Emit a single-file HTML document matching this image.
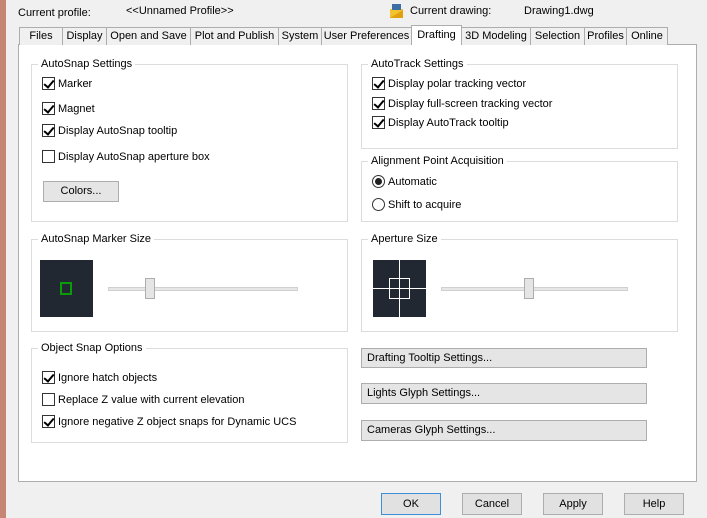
<!DOCTYPE html>
<html><head><style>
*{margin:0;padding:0;box-sizing:border-box}
body{width:707px;height:518px;background:#f0f0f0;position:relative;overflow:hidden;font:11px "Liberation Sans",sans-serif;color:#000}
.a{position:absolute;white-space:nowrap}
.strip{left:0;top:0;width:6px;height:518px;background:#c58676}
.panel{left:18px;top:44px;width:679px;height:438px;background:#fff;border:1px solid #adadad}
.tab{position:absolute;top:27px;height:18px;background:#f0f0f0;border:1px solid #adadad;border-bottom:none;text-align:center;line-height:16px;white-space:nowrap;overflow:hidden}
.tab.sel{top:25px;height:20px;background:#fff;line-height:18px}
.g{position:absolute;border:1px solid #dcdcdc}
.g>.t{position:absolute;top:-8px;left:6px;background:#fff;padding:0 3px;line-height:14px;white-space:nowrap}
.cb{position:absolute;width:13px;height:13px;border:1px solid #333;background:#fff}
.cb.c::after{content:"";position:absolute;left:3px;top:0px;width:4px;height:8px;border:solid #000;border-width:0 2px 2px 0;transform:rotate(40deg)}
.lbl{position:absolute;line-height:14px;white-space:nowrap}
.rb{position:absolute;width:13px;height:13px;border:1px solid #333;border-radius:50%;background:#fff}
.rb.c::after{content:"";position:absolute;left:2px;top:2px;width:7px;height:7px;border-radius:50%;background:#222}
.btn{position:absolute;background:#e5e5e5;border:1px solid #adadad;line-height:18px;white-space:nowrap}
.bb{position:absolute;top:493px;width:60px;height:22px;background:#e1e1e1;border:1px solid #adadad;text-align:center;line-height:20px}
</style></head><body>
<div class="a strip"></div>
<div class="a" style="left:18px;top:7px">Current profile:</div>
<div class="a" style="left:126px;top:5px">&lt;&lt;Unnamed Profile&gt;&gt;</div>
<svg class="a" style="left:390px;top:4px" width="14" height="14"><rect x="0" y="5" width="13" height="9" fill="#f2c230"/><rect x="2" y="0" width="9" height="6" fill="#3a6ea5"/><path d="M0 14 L13 6 L13 14Z" fill="#e0a010"/></svg>
<div class="a" style="left:410px;top:5px">Current drawing:</div>
<div class="a" style="left:524px;top:5px">Drawing1.dwg</div>
<div class="a panel"></div>
<div class="tab" style="left:19px;width:44px">Files</div>
<div class="tab" style="left:62px;width:45px">Display</div>
<div class="tab" style="left:106px;width:85px">Open and Save</div>
<div class="tab" style="left:190px;width:89px">Plot and Publish</div>
<div class="tab" style="left:278px;width:44px">System</div>
<div class="tab" style="left:321px;width:91px">User Preferences</div>
<div class="tab sel" style="left:411px;width:51px">Drafting</div>
<div class="tab" style="left:461px;width:70px">3D Modeling</div>
<div class="tab" style="left:530px;width:55px">Selection</div>
<div class="tab" style="left:584px;width:43px">Profiles</div>
<div class="tab" style="left:626px;width:42px">Online</div>

<div class="g" style="left:31px;top:64px;width:317px;height:158px"><span class="t">AutoSnap Settings</span></div>
<div class="cb c" style="left:42px;top:77px"></div><div class="lbl" style="left:58px;top:77px">Marker</div>
<div class="cb c" style="left:42px;top:102px"></div><div class="lbl" style="left:58px;top:102px">Magnet</div>
<div class="cb c" style="left:42px;top:124px"></div><div class="lbl" style="left:58px;top:124px">Display AutoSnap tooltip</div>
<div class="cb" style="left:42px;top:150px"></div><div class="lbl" style="left:58px;top:150px">Display AutoSnap aperture box</div>
<div class="btn" style="left:43px;top:181px;width:76px;height:21px;text-align:center">Colors...</div>

<div class="g" style="left:361px;top:64px;width:317px;height:85px"><span class="t">AutoTrack Settings</span></div>
<div class="cb c" style="left:372px;top:77px"></div><div class="lbl" style="left:388px;top:77px">Display polar tracking vector</div>
<div class="cb c" style="left:372px;top:97px"></div><div class="lbl" style="left:388px;top:97px">Display full-screen tracking vector</div>
<div class="cb c" style="left:372px;top:116px"></div><div class="lbl" style="left:388px;top:116px">Display AutoTrack tooltip</div>

<div class="g" style="left:361px;top:161px;width:317px;height:61px"><span class="t">Alignment Point Acquisition</span></div>
<div class="rb c" style="left:372px;top:175px"></div><div class="lbl" style="left:388px;top:175px">Automatic</div>
<div class="rb" style="left:372px;top:198px"></div><div class="lbl" style="left:388px;top:198px">Shift to acquire</div>

<div class="g" style="left:31px;top:239px;width:317px;height:93px"><span class="t">AutoSnap Marker Size</span></div>
<div class="a" style="left:40px;top:260px;width:53px;height:57px;background:#222831"></div>
<div class="a" style="left:60px;top:282px;width:12px;height:13px;border:2px solid #0a9a0a"></div>
<div class="a" style="left:108px;top:287px;width:190px;height:4px;background:#e7e7e7;border:1px solid #d0d0d0"></div>
<div class="a" style="left:145px;top:278px;width:10px;height:21px;background:#e5e5e5;border:1px solid #adadad"></div>

<div class="g" style="left:361px;top:239px;width:317px;height:93px"><span class="t">Aperture Size</span></div>
<div class="a" style="left:373px;top:260px;width:53px;height:57px;background:#222831"></div>
<div class="a" style="left:373px;top:288px;width:53px;height:1px;background:#fff"></div>
<div class="a" style="left:399px;top:260px;width:1px;height:57px;background:#fff"></div>
<div class="a" style="left:389px;top:278px;width:21px;height:21px;border:1px solid #fff"></div>
<div class="a" style="left:441px;top:287px;width:187px;height:4px;background:#e7e7e7;border:1px solid #d0d0d0"></div>
<div class="a" style="left:524px;top:278px;width:10px;height:21px;background:#e5e5e5;border:1px solid #adadad"></div>

<div class="g" style="left:31px;top:348px;width:317px;height:95px"><span class="t">Object Snap Options</span></div>
<div class="cb c" style="left:42px;top:371px"></div><div class="lbl" style="left:58px;top:371px">Ignore hatch objects</div>
<div class="cb" style="left:42px;top:393px"></div><div class="lbl" style="left:58px;top:393px">Replace Z value with current elevation</div>
<div class="cb c" style="left:42px;top:415px"></div><div class="lbl" style="left:58px;top:415px">Ignore negative Z object snaps for Dynamic UCS</div>

<div class="btn" style="left:361px;top:348px;width:286px;height:20px;padding-left:5px">Drafting Tooltip Settings...</div>
<div class="btn" style="left:361px;top:383px;width:286px;height:21px;padding-left:5px">Lights Glyph Settings...</div>
<div class="btn" style="left:361px;top:420px;width:286px;height:21px;padding-left:5px">Cameras Glyph Settings...</div>

<div class="bb" style="left:381px;border-color:#3c8fd8">OK</div>
<div class="bb" style="left:462px">Cancel</div>
<div class="bb" style="left:543px">Apply</div>
<div class="bb" style="left:624px">Help</div>
</body></html>
